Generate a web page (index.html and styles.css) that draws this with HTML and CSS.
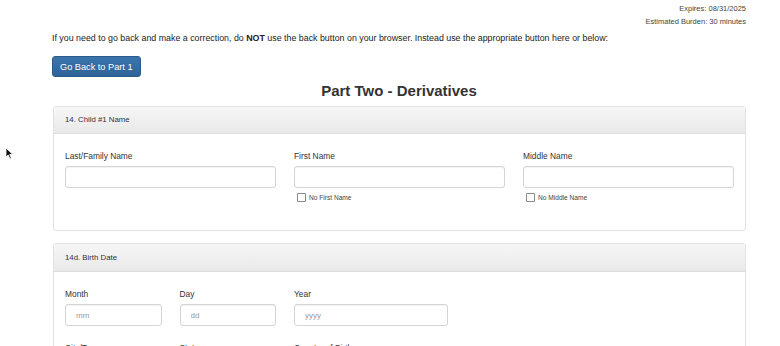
FILE: index.html
```html
<!DOCTYPE html>
<html lang="en">
<head>
  <meta charset="utf-8">
  <meta name="viewport" content="width=device-width, initial-scale=1.0">
  <title>Part Two - Derivatives</title>
  <link rel="stylesheet" href="styles.css">
</head>
<body>

  <div class="page">
    <div class="meta">
      <div>OMB No. 1615-0052</div>
      <div>Expires: 08/31/2025</div>
      <div>Estimated Burden: 30 minutes</div>
    </div>

    <p class="notice">If you need to go back and make a correction, do <b>NOT</b> use the back button on your browser. Instead use the appropriate button here or below:</p>

    <button class="btn-back" type="button">Go Back to Part 1</button>

    <h1 class="title">Part Two - Derivatives</h1>

    <!-- 14. 자녀 이름 -->
    <div class="panel">
      <div class="panel-head">14. Child #1 Name</div>
      <div class="panel-body name-body">
        <div class="row">
          <div class="field span-4">
            <label>Last/Family Name</label>
            <input type="text" class="input">
          </div>
          <div class="field span-4">
            <label>First Name</label>
            <input type="text" class="input">
            <div class="check"><span class="box"></span>No First Name</div>
          </div>
          <div class="field span-4">
            <label>Middle Name</label>
            <input type="text" class="input">
            <div class="check"><span class="box"></span>No Middle Name</div>
          </div>
        </div>
      </div>
    </div>

    <!-- 14d. 생년월일 -->
    <div class="panel">
      <div class="panel-head tall">14d. Birth Date</div>
      <div class="panel-body">
        <div class="row">
          <div class="field span-2">
            <label>Month</label>
            <input type="text" class="input" placeholder="mm">
          </div>
          <div class="field span-2">
            <label>Day</label>
            <input type="text" class="input" placeholder="dd">
          </div>
          <div class="field span-3">
            <label>Year</label>
            <input type="text" class="input" placeholder="yyyy">
          </div>
        </div>
        <div class="row next-row">
          <div class="field span-2">
            <label>City/Town</label>
            <input type="text" class="input">
          </div>
          <div class="field span-2">
            <label>State</label>
            <input type="text" class="input">
          </div>
          <div class="field span-3">
            <label>Country of Birth</label>
            <input type="text" class="input">
          </div>
        </div>
      </div>
    </div>
  </div>

  <svg class="cursor" width="9" height="13" viewBox="0 0 9 13">
    <path d="M1 1 L1 10 L3.2 8 L5 12 L6.4 11.3 L4.7 7.5 L7.8 7.5 Z" fill="#111" stroke="#fff" stroke-width="0.8"/>
  </svg>

</body>
</html>
```

FILE: styles.css
```css
body {
  font-family: 'Liberation Sans', Arial, sans-serif;
  margin: 0;
  padding: 0;
  background-color: #fff;
  color: #333;
  overflow: hidden;
  position: relative;
}

.page {
  width: 694px;
  margin-left: 52px;
}

/* 오른쪽 위 안내 */
.meta {
  margin-top: -11px;
  text-align: right;
  font-size: 7.5px;
  line-height: 13px;
  color: #444;
}

.notice {
  margin: 4px 0 0;
  font-size: 8.85px;
  line-height: 12px;
  color: #222;
}

.btn-back {
  display: block;
  margin-top: 12px;
  height: 21px;
  padding: 0 7px;
  font-family: inherit;
  font-size: 9.2px;
  color: #fff;
  background: linear-gradient(#3b74ad, #2f6398);
  border: 1px solid #2a5b8c;
  border-radius: 3px;
  cursor: pointer;
}

.title {
  margin: 5px 0 0;
  font-size: 15px;
  line-height: 18px;
  font-weight: bold;
  text-align: center;
  color: #333;
}

.panel {
  margin-top: 6px;
  margin-left: 1px;
  border: 1px solid #e2e2e2;
  border-radius: 3px;
  background: #fff;
}

.panel + .panel {
  margin-top: 12px;
}

.panel-head {
  height: 26px;
  line-height: 26px;
  padding: 0 11px;
  font-size: 7.8px;
  color: #333;
  background: linear-gradient(#f6f6f6, #e9e9e9);
  border-bottom: 1px solid #dcdcdc;
}

.panel-head.tall {
  height: 27px;
  line-height: 27px;
}

.panel-body {
  padding: 16px 11px 0;
}

.name-body {
  padding-bottom: 28px;
}

.row {
  display: grid;
  grid-template-columns: repeat(12, 1fr);
  column-gap: 18px;
}

.next-row {
  margin-top: 16px;
}

.span-2 { grid-column: span 2; }
.span-3 { grid-column: span 3; }
.span-4 { grid-column: span 4; }

.field label {
  display: block;
  font-size: 8.4px;
  line-height: 12px;
  color: #333;
}

.input {
  display: block;
  box-sizing: border-box;
  width: 100%;
  height: 22px;
  margin-top: 4px;
  padding: 0 10px;
  font-family: inherit;
  font-size: 8px;
  border: 1px solid #d4d4d4;
  border-radius: 3px;
  box-shadow: inset 0 1px 1px rgba(0,0,0,0.05);
  background: #fff;
}

.input::placeholder {
  color: #999;
}

.check {
  display: flex;
  align-items: center;
  margin-top: 5px;
  padding-left: 3px;
  font-size: 6.6px;
  line-height: 9px;
  color: #444;
}

.check .box {
  width: 7px;
  height: 7px;
  margin-right: 3px;
  border: 1px solid #888;
  border-radius: 1px;
  background: #fff;
}

.cursor {
  position: absolute;
  left: 5px;
  top: 147px;
}
```
